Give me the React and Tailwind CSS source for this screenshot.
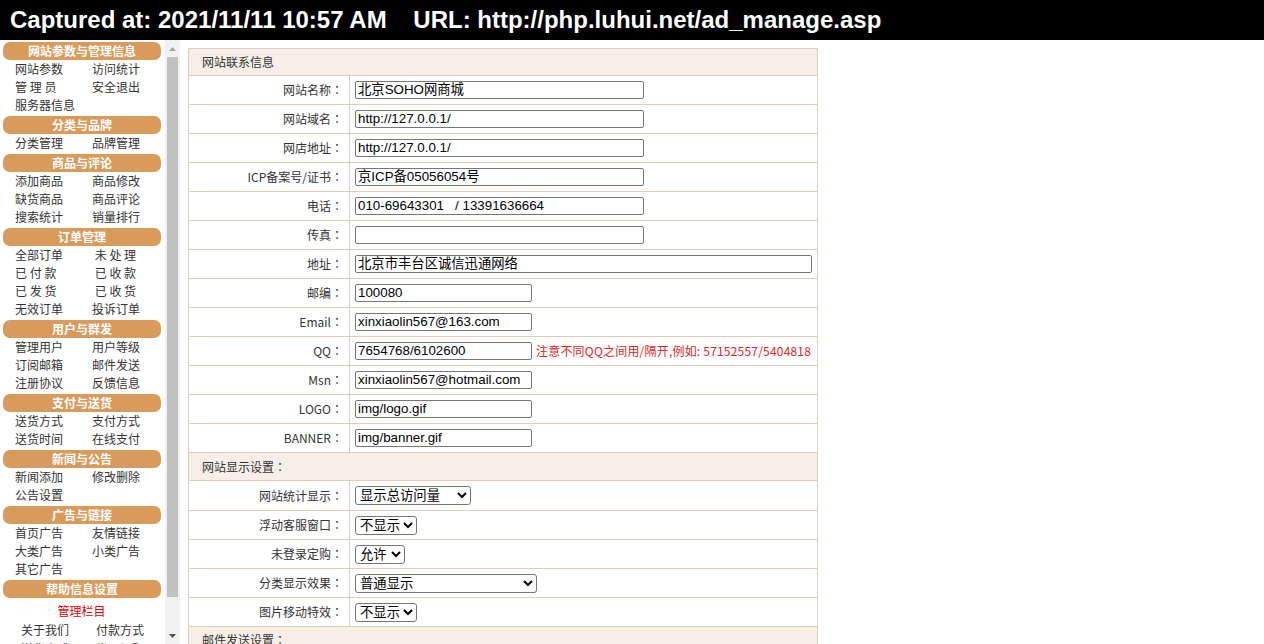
import React from "react";

const groups = [
  { title: "网站参数与管理信息", items: [["网站参数", "访问统计"], ["管 理 员", "安全退出"], ["服务器信息", ""]] },
  { title: "分类与品牌", items: [["分类管理", "品牌管理"]] },
  { title: "商品与评论", items: [["添加商品", "商品修改"], ["缺货商品", "商品评论"], ["搜索统计", "销量排行"]] },
  { title: "订单管理", items: [["全部订单", " 未 处 理"], ["已 付 款", " 已 收 款"], ["已 发 货", " 已 收 货"], ["无效订单", "投诉订单"]] },
  { title: "用户与群发", items: [["管理用户", "用户等级"], ["订阅邮箱", "邮件发送"], ["注册协议", "反馈信息"]] },
  { title: "支付与送货", items: [["送货方式", "支付方式"], ["送货时间", "在线支付"]] },
  { title: "新闻与公告", items: [["新闻添加", "修改删除"], ["公告设置", ""]] },
  { title: "广告与链接", items: [["首页广告", "友情链接"], ["大类广告", "小类广告"], ["其它广告", ""]] },
];

function Pill({ title }) {
  return (
    <div className="h-[20px] pt-[2px]">
      <div className="ml-[3px] w-[158px] h-[18px] rounded-[7px] bg-[#d99b5c] text-white font-bold text-[12px] leading-[18px] text-center">
        {title}
      </div>
    </div>
  );
}

function Sidebar() {
  return (
    <div className="w-[180px] h-full flex shrink-0">
      <div className="w-[165px] h-full overflow-hidden text-[12px] text-[#333]">
        {groups.map((g) => (
          <div key={g.title}>
            <Pill title={g.title} />
            {g.items.map((r, i) => (
              <div key={i} className="h-[18px] leading-[18px] pl-[15px] grid grid-cols-[77px_77px] whitespace-pre">
                <span>{r[0]}</span>
                <span>{r[1]}</span>
              </div>
            ))}
          </div>
        ))}
        <Pill title="帮助信息设置" />
        <div className="mt-[3px] h-[19px] leading-[19px] text-center text-[#e00000] pr-[2px]">管理栏目</div>
        <div className="h-[19px] leading-[19px] pl-[21px] grid grid-cols-[75px_75px]">
          <span>关于我们</span>
          <span>付款方式</span>
        </div>
        <div className="h-[19px] leading-[19px] pl-[21px] grid grid-cols-[75px_75px]">
          <span>送货方式</span>
          <span>常见问题</span>
        </div>
      </div>
      {/* fake scrollbar */}
      <div className="w-[15px] h-full bg-[#f1f1f1] flex flex-col items-center">
        <div className="h-[17px] flex items-center justify-center">
          <svg width="7" height="4" viewBox="0 0 7 4"><path d="M3.5 0L7 4H0z" fill="#a3a3a3" /></svg>
        </div>
        <div className="w-[11px] h-[540px] bg-[#c1c1c1]" />
        <div className="flex-1" />
        <div className="h-[17px] flex items-center justify-center">
          <svg width="7" height="4" viewBox="0 0 7 4"><path d="M0 0H7L3.5 4z" fill="#505050" /></svg>
        </div>
      </div>
    </div>
  );
}

// full-width colon, centred like the original font draws it
function Colon({ text }) {
  return (
    <>
      {text}
      <span className="font-['Noto_Sans_CJK_TC',sans-serif]">：</span>
    </>
  );
}

function Row({ label, children, h = "h-[29px]" }) {
  return (
    <div className={`flex ${h} border-b border-[#dccebf] bg-white`}>
      <div className="w-[161px] shrink-0 border-r border-[#dccebf] flex items-center justify-end pr-[6px] text-[12px] text-[#333]">
        <Colon text={label} />
      </div>
      <div className="flex-1 flex items-center pl-[5px]">{children}</div>
    </div>
  );
}

function Section({ title, h = "h-[27px]", colon = true }) {
  return (
    <div className={`${h} border-b border-[#dccebf] bg-[#f7efe7] flex items-center pl-[13px] text-[12px] text-[#333]`}>
      {colon ? <Colon text={title} /> : title}
    </div>
  );
}

function Field({ value, w }) {
  return (
    <input
      readOnly
      defaultValue={value}
      className={`${w} h-[18px] border border-[#767676] rounded-[2px] px-[2px] bg-white text-black text-[13.33px] outline-none font-['Liberation_Sans','Noto_Sans_CJK_SC',sans-serif] whitespace-pre`}
    />
  );
}

function Pick({ options, w }) {
  return (
    <select
      defaultValue={options[0]}
      className={`${w} h-[19px] border border-[#767676] rounded-[3px] bg-white text-black text-[13.33px] font-['Liberation_Sans','Noto_Sans_CJK_SC',sans-serif]`}
    >
      {options.map((o) => (
        <option key={o}>{o}</option>
      ))}
    </select>
  );
}

export default function App() {
  return (
    <div className="w-full h-screen overflow-hidden bg-white flex flex-col font-['Noto_Sans_CJK_SC','Liberation_Sans',sans-serif]">
      <div className="h-[40px] shrink-0 bg-black text-white font-bold text-[24px] leading-[40px] pl-[10px] whitespace-pre font-['Liberation_Sans',sans-serif]">
        {"Captured at: 2021/11/11 10:57 AM    URL: http://php.luhui.net/ad_manage.asp"}
      </div>
      <div className="flex flex-1 min-h-0">
        <Sidebar />
        <div className="pl-[8px] pt-[8px]">
          <div className="w-[630px] border border-[#dccebf]">
            <Section title="网站联系信息" colon={false} />
            <Row label="网站名称"><Field w="w-[289px]" value="北京SOHO网商城" /></Row>
            <Row label="网站域名"><Field w="w-[289px]" value="http://127.0.0.1/" /></Row>
            <Row label="网店地址"><Field w="w-[289px]" value="http://127.0.0.1/" /></Row>
            <Row label="ICP备案号/证书"><Field w="w-[289px]" value="京ICP备05056054号" /></Row>
            <Row label="电话"><Field w="w-[289px]" value="010-69643301   / 13391636664" /></Row>
            <Row label="传真"><Field w="w-[289px]" value="" /></Row>
            <Row label="地址"><Field w="w-[457px]" value="北京市丰台区诚信迅通网络" /></Row>
            <Row label="邮编"><Field w="w-[177px]" value="100080" /></Row>
            <Row label="Email"><Field w="w-[177px]" value="xinxiaolin567@163.com" /></Row>
            <Row label="QQ">
              <Field w="w-[177px]" value="7654768/6102600" />
              <span className="ml-[4px] text-[12px] tracking-[0.2px] text-[#e41c1c]">注意不同QQ之间用/隔开,例如: 57152557/5404818</span>
            </Row>
            <Row label="Msn"><Field w="w-[177px]" value="xinxiaolin567@hotmail.com" /></Row>
            <Row label="LOGO"><Field w="w-[177px]" value="img/logo.gif" /></Row>
            <Row label="BANNER"><Field w="w-[177px]" value="img/banner.gif" /></Row>
            <Section title="网站显示设置" h="h-[28px]" />
            <Row label="网站统计显示" h="h-[30px]"><Pick w="w-[116px]" options={["显示总访问量", "显示今日访问量", "不显示"]} /></Row>
            <Row label="浮动客服窗口"><Pick w="w-[62px]" options={["不显示", "显示"]} /></Row>
            <Row label="未登录定购"><Pick w="w-[50px]" options={["允许", "禁止"]} /></Row>
            <Row label="分类显示效果"><Pick w="w-[182px]" options={["普通显示", "下拉显示"]} /></Row>
            <Row label="图片移动特效"><Pick w="w-[62px]" options={["不显示", "显示"]} /></Row>
            <Section title="邮件发送设置" />
            <Row label="邮件服务器"><Field w="w-[289px]" value="" /></Row>
          </div>
        </div>
      </div>
    </div>
  );
}
